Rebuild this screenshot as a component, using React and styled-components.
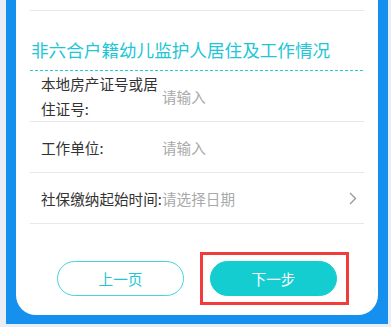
import React from "react";
import styled, { createGlobalStyle } from "styled-components";

const GlobalStyle = createGlobalStyle`
  html, body {
    margin: 0;
    padding: 0;
    background: #e9eef6;
  }
  body {
    font-family: "Noto Sans CJK SC", "Noto Sans", sans-serif;
  }
`;

const Frame = styled.div`
  margin: 0 3px 3px 6px;
  height: 324px;
  box-sizing: border-box;
  padding: 0 10px 9px 10px;
  background: #1690ef;
`;

const Card = styled.div`
  height: 315px;
  box-sizing: border-box;
  background: #ffffff;
  border-radius: 0 0 20px 20px;
  padding: 0 14px 19px;
  display: flex;
  flex-direction: column;
`;

const TopRule = styled.div`
  height: 10px;
  border-bottom: 1px solid #e8e8ea;
`;

const SectionTitle = styled.div`
  padding: 27px 0 8px 1px;
  font-size: 17.6px;
  line-height: 24px;
  color: #20c6d6;
  white-space: nowrap;
`;

const Dashed = styled.div`
  height: 1px;
  background: repeating-linear-gradient(
    90deg,
    #22ccd6 0,
    #22ccd6 3px,
    transparent 3px,
    transparent 5px
  );
`;

const Row = styled.div`
  height: 50px;
  display: flex;
  align-items: center;
  padding: 0 7px 0 11px;
  border-bottom: 1px solid #e8e8ea;
  font-size: 14.6px;
`;

const Label = styled.div`
  width: 121px;
  flex-shrink: 0;
  color: #333333;
  line-height: 25px;
`;

const Placeholder = styled.div`
  flex: 1;
  color: #a9a9a9;
  line-height: 25px;
  white-space: nowrap;
`;

const Chevron = styled.svg`
  width: 8px;
  height: 13px;
  flex-shrink: 0;
`;

const Actions = styled.div`
  margin-top: auto;
  display: flex;
  justify-content: center;
  gap: 26px;
`;

const Button = styled.button`
  width: 127px;
  height: 35px;
  box-sizing: border-box;
  border-radius: 18px;
  font-family: inherit;
  font-size: 14.6px;
  cursor: pointer;
  border: 1px solid ${(p) => (p.$primary ? "#13cdd1" : "#46d3dc")};
  background: ${(p) => (p.$primary ? "#13cdd1" : "#ffffff")};
  color: ${(p) => (p.$primary ? "#ffffff" : "#20c6d6")};
`;

// red annotation box drawn over the "next" button
const Highlight = styled.span`
  position: relative;
  display: inline-flex;

  &::after {
    content: "";
    position: absolute;
    left: -10px;
    right: -12px;
    top: -9px;
    bottom: -9px;
    border: 3px solid #f23c3c;
    pointer-events: none;
  }
`;

const fields = [
  { label: "本地房产证号或居住证号:", value: "请输入" },
  { label: "工作单位:", value: "请输入" },
  { label: "社保缴纳起始时间:", value: "请选择日期", arrow: true },
];

export default function App() {
  return (
    <>
      <GlobalStyle />
      <Frame>
        <Card>
          <TopRule />
          <SectionTitle>非六合户籍幼儿监护人居住及工作情况</SectionTitle>
          <Dashed />
          {fields.map((f) => (
            <Row key={f.label}>
              <Label>{f.label}</Label>
              <Placeholder>{f.value}</Placeholder>
              {f.arrow && (
                <Chevron viewBox="0 0 8 13" fill="none">
                  <path d="M1 1l5.5 5.5L1 12" stroke="#9a9a9a" strokeWidth="1.4" />
                </Chevron>
              )}
            </Row>
          ))}
          <Actions>
            <Button>上一页</Button>
            <Highlight>
              <Button $primary>下一步</Button>
            </Highlight>
          </Actions>
        </Card>
      </Frame>
    </>
  );
}
